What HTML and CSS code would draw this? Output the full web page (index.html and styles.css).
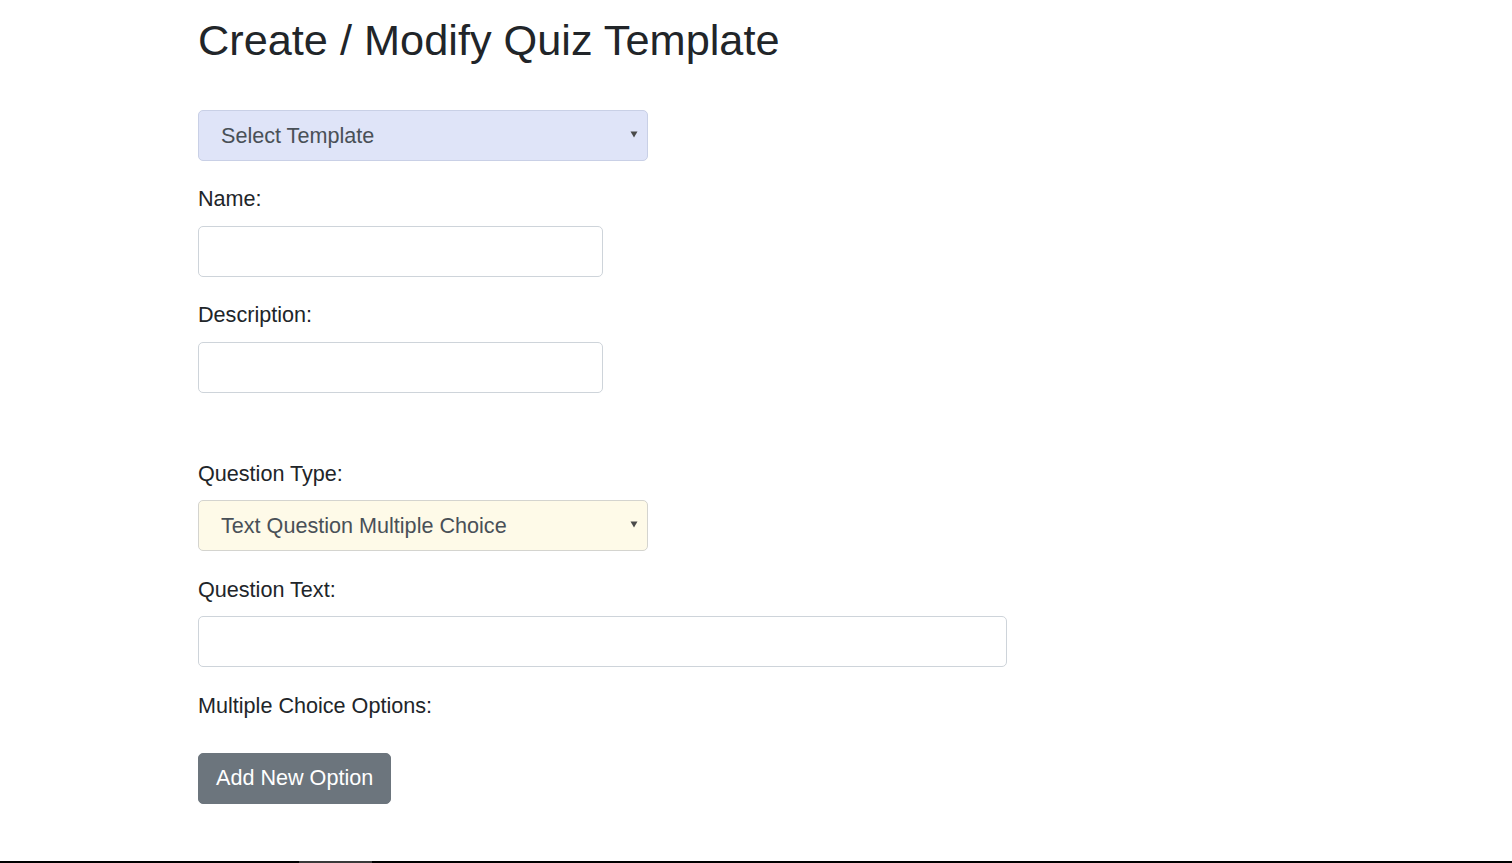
FILE: index.html
```html
<!DOCTYPE html>
<html lang="en">
<head>
<meta charset="utf-8">
<title>Create / Modify Quiz Template</title>
<link rel="stylesheet" href="styles.css">
</head>
<body>
<div class="container">
  <h1 class="title">Create / Modify Quiz Template</h1>

  <div class="select-wrap select-template">
    <select class="select select-blue">
      <option>Select Template</option>
    </select>
    <svg class="caret" width="8" height="7" viewBox="0 0 8 7"><path d="M0.5 0.5 L7.5 0.5 L4 6.5 Z" fill="#4a4a4a"/></svg>
  </div>

  <div class="group">
    <label class="label">Name:</label>
    <input class="input input-short" type="text">
  </div>

  <div class="group">
    <label class="label">Description:</label>
    <input class="input input-short" type="text">
  </div>

  <div class="spacer"></div>

  <div class="group">
    <label class="label">Question Type:</label>
    <div class="select-wrap">
      <select class="select select-yellow">
        <option>Text Question Multiple Choice</option>
      </select>
      <svg class="caret" width="8" height="7" viewBox="0 0 8 7"><path d="M0.5 0.5 L7.5 0.5 L4 6.5 Z" fill="#4a4a4a"/></svg>
    </div>
  </div>

  <div class="group">
    <label class="label">Question Text:</label>
    <input class="input input-long" type="text">
  </div>

  <div class="group group-options">
    <label class="label">Multiple Choice Options:</label>
  </div>

  <button class="btn" type="button">Add New Option</button>
</div>

<div class="window-edge"><span class="edge-thumb"></span></div>
</body>
</html>
```

FILE: styles.css
```css
html, body {
  margin: 0;
  padding: 0;
  background: #ffffff;
  overflow: hidden;
}

body {
  font-family: "Liberation Sans", Arial, sans-serif;
  font-size: 21.6px;
  line-height: 32px;
  color: #212529;
}

.container {
  max-width: 1116px;
  margin: 0 auto;
  padding-top: 15px;
}

.title {
  margin: 0 0 44px 0;
  font-size: 43.3px;
  line-height: 51px;
  font-weight: 400;
  color: #212529;
}

.select-wrap {
  position: relative;
  width: 450px;
}

.select-template {
  margin-bottom: 22px;
}

.select {
  display: block;
  width: 450px;
  height: 51px;
  box-sizing: border-box;
  margin: 0;
  padding: 0 22px;
  font-family: "Liberation Sans", Arial, sans-serif;
  font-size: 21.6px;
  color: #495057;
  border: 1px solid #ced4da;
  border-radius: 5px;
  -webkit-appearance: none;
  appearance: none;
  outline: none;
}

.select-blue {
  background: #dfe4f8;
  border-color: #c9d0e6;
}

.select-yellow {
  background: #fefae8;
  border-color: #d4d4cf;
}

.caret {
  position: absolute;
  right: 10px;
  top: 21px;
  pointer-events: none;
}

.group {
  display: flex;
  flex-direction: column;
  align-items: flex-start;
  margin-bottom: 22.5px;
}

.label {
  display: block;
  line-height: 32px;
  margin-bottom: 10.5px;
}

.input {
  display: block;
  height: 51px;
  box-sizing: border-box;
  margin: 0;
  padding: 0 16px;
  font-family: "Liberation Sans", Arial, sans-serif;
  font-size: 21.6px;
  color: #495057;
  background: #ffffff;
  border: 1px solid #ced4da;
  border-radius: 5px;
  outline: none;
}

.input-short {
  width: 405px;
}

.input-long {
  width: 809px;
}

.spacer {
  height: 42.5px;
}

.group-options {
  margin-bottom: 0;
}

.group-options .label {
  margin-bottom: 31px;
}

.btn {
  display: block;
  height: 51px;
  padding: 0 17px;
  margin: 0;
  font-family: "Liberation Sans", Arial, sans-serif;
  font-size: 21.6px;
  color: #ffffff;
  background: #6c757d;
  border: 1px solid #6c757d;
  border-radius: 5px;
  cursor: pointer;
}

.window-edge {
  position: fixed;
  left: 0;
  right: 0;
  bottom: 0;
  height: 2px;
  background: #000000;
}

.edge-thumb {
  position: absolute;
  left: 299px;
  top: 0;
  width: 73px;
  height: 2px;
  background: #3a3a3a;
}
```
